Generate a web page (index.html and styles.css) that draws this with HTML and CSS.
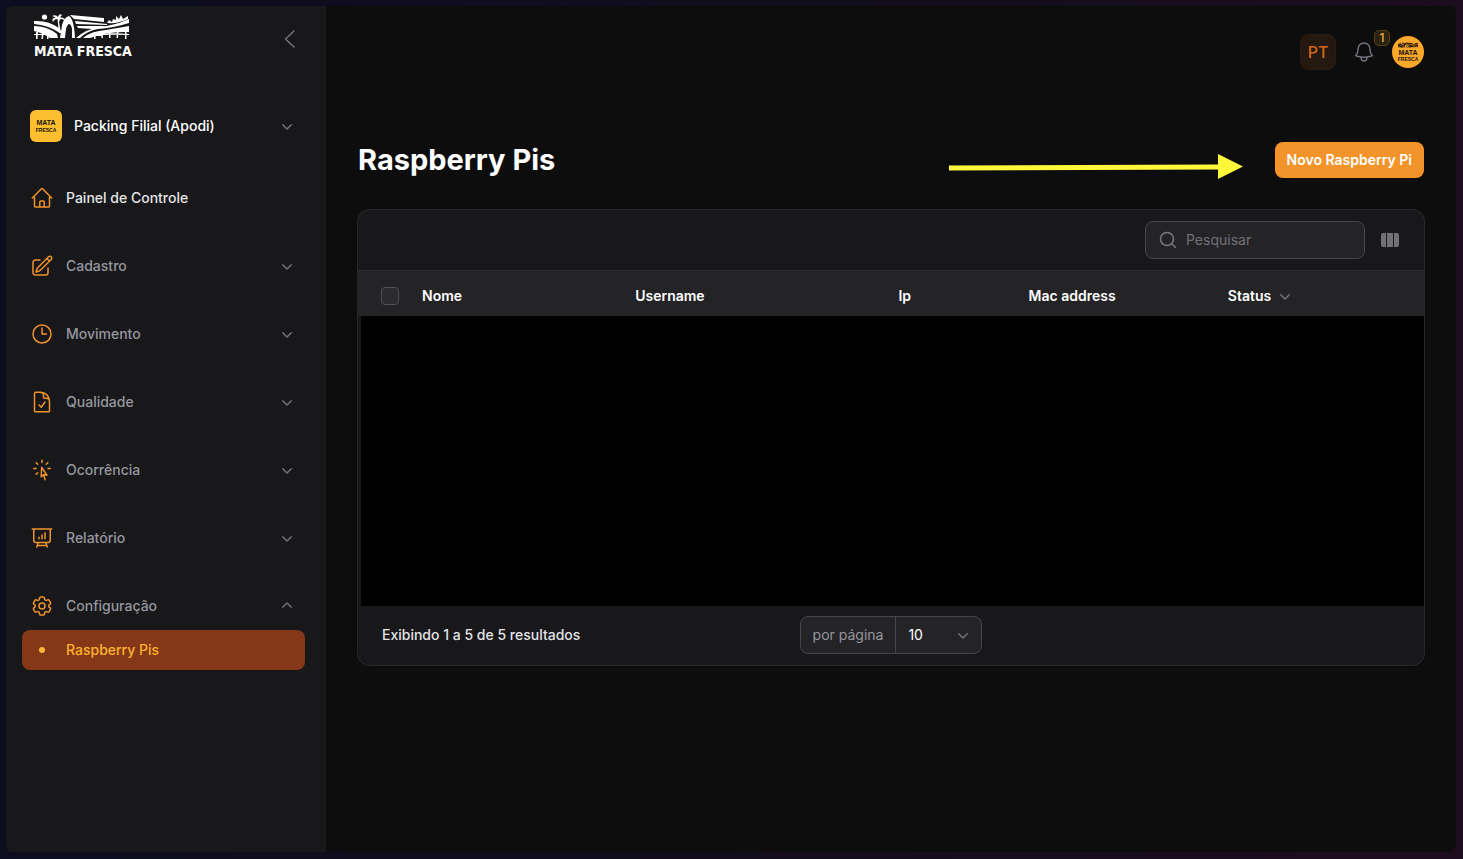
FILE: index.html
```html
<!DOCTYPE html>
<html lang="pt-BR">
<head>
<meta charset="utf-8">
<meta name="viewport" content="width=device-width, initial-scale=1">
<title>Raspberry Pis</title>
<link rel="stylesheet" href="styles.css">
</head>
<body>
<svg class="sprite" aria-hidden="true">
  <symbol id="chevron-down" viewBox="0 0 20 20"><path fill="currentColor" d="M5.22 8.22a.75.75 0 0 1 1.06 0L10 11.94l3.72-3.72a.75.75 0 1 1 1.06 1.06l-4.25 4.25a.75.75 0 0 1-1.06 0L5.22 9.28a.75.75 0 0 1 0-1.06Z"/></symbol>
  <symbol id="chevron-up" viewBox="0 0 20 20"><path fill="currentColor" d="M14.78 11.78a.75.75 0 0 1-1.06 0L10 8.06l-3.72 3.72a.75.75 0 1 1-1.06-1.06l4.25-4.25a.75.75 0 0 1 1.06 0l4.25 4.25a.75.75 0 0 1 0 1.06Z"/></symbol>
  <symbol id="landscape" viewBox="0 0 95 25">
    <circle cx="10.500" cy="3" r="2.600"/>
    <path d="M0 7Q14 6 25 14L28 19H26Q14 11 0 10ZM0 12Q13 12 23 20L24 24H16Q9 19 0 17Z"/>
    <path d="M23.500 5Q20 5 19 8Q17 4 22 3.500L18 2Q22 0 24 3Q25 -1 28 1L26 3.500Q31 3 31 7Q28 4 26 5.500L25 8L27 19H25Z"/>
    <path d="M26 24L28 11Q30 3 35 2Q40 5 41 24H38V15Q37 10 35 10Q32 10 31 24Z"/>
    <path d="M36 1L70 4V8L40 5ZM41 7L73 10V11L42 10ZM43 12L71 12L58 15L44 14ZM42 24Q52 15 66 13Q82 11 95 5V9Q79 14 64 15Q53 17 46 24ZM49 24Q57 17 72 16L95 12V18Q74 17 56 24Z"/>
    <path d="M73 9L75 6L78 8L79 5L82 6L82 2L85 5L87 1L89 5L94 2V5Q84 10 73 9Z"/>
    <path d="M0 20H16V21H0ZM2 18H4L3.500 25H2ZM8 18H9.500L9 25H7.500ZM13 18H14.500V25H13ZM56 21Q74 18 95 20V21Q74 20 56 22ZM60 18H61.500V25H60ZM67 18H68.500L69 24H67.500ZM75 17H76.500V24H75ZM83 17H84.500L84 24H82.500ZM91 18H92.500V25H91Z"/>
  </symbol>
</svg>

<div class="app">
  <aside class="sidebar">
    <header class="brand-row">
      <a class="brand" href="#">
        <svg class="brand-art" aria-hidden="true"><use href="#landscape"/></svg>
        <span class="brand-name">MATA FRESCA</span>
      </a>
      <button class="collapse" type="button" aria-label="Recolher menu">
        <svg viewBox="0 0 24 24" class="icon-24"><path d="M16 4L7.500 12L16 20"/></svg>
      </button>
    </header>

    <button class="tenant" type="button">
      <svg class="tile" viewBox="0 0 32 32" aria-hidden="true">
        <rect width="32" height="32" fill="#fdbf2f"/>
        <text x="16" y="15" class="tile-text">MATA</text>
        <text x="16" y="22" class="tile-text tile-small">FRESCA</text>
      </svg>
      <span class="grow">Packing Filial (Apodi)</span>
      <svg class="chevron"><use href="#chevron-down"/></svg>
    </button>

    <nav class="menu" aria-label="Principal">
      <a class="item item-plain" href="#">
        <svg viewBox="0 0 24 24" class="icon-24"><path d="m2.250 12 8.954-8.955c.44-.439 1.152-.439 1.591 0L21.750 12M4.500 9.750v10.125c0 .621.504 1.125 1.125 1.125H9.750v-4.875c0-.621.504-1.125 1.125-1.125h2.250c.621 0 1.125.504 1.125 1.125V21h4.125c.621 0 1.125-.504 1.125-1.125V9.750M8.250 21h8.250"/></svg>
        <span class="grow">Painel de Controle</span>
      </a>
      <button class="item" type="button">
        <svg viewBox="0 0 24 24" class="icon-24"><path d="m16.862 4.487 1.687-1.688a1.875 1.875 0 1 1 2.652 2.652L10.582 16.070a4.500 4.500 0 0 1-1.897 1.130L6 18l.8-2.685a4.500 4.500 0 0 1 1.130-1.897l8.932-8.931Zm0 0L19.500 7.125M18 14v4.750A2.250 2.250 0 0 1 15.750 21H5.250A2.250 2.250 0 0 1 3 18.750V8.250A2.250 2.250 0 0 1 5.250 6H10"/></svg>
        <span class="grow">Cadastro</span>
        <svg class="chevron"><use href="#chevron-down"/></svg>
      </button>
      <button class="item" type="button">
        <svg viewBox="0 0 24 24" class="icon-24"><path d="M12 6v6h4.500m4.500 0a9 9 0 1 1-18 0 9 9 0 0 1 18 0Z"/></svg>
        <span class="grow">Movimento</span>
        <svg class="chevron"><use href="#chevron-down"/></svg>
      </button>
      <button class="item" type="button">
        <svg viewBox="0 0 24 24" class="icon-24"><path d="M10.125 2.250h-4.500c-.621 0-1.125.504-1.125 1.125v17.250c0 .621.504 1.125 1.125 1.125h12.750c.621 0 1.125-.504 1.125-1.125v-9M10.125 2.250h.375a9 9 0 0 1 9 9v.375M10.125 2.250A3.375 3.375 0 0 1 13.500 5.625v1.500c0 .621.504 1.125 1.125 1.125h1.500a3.375 3.375 0 0 1 3.375 3.375M9 15l2.250 2.250L15 12"/></svg>
        <span class="grow">Qualidade</span>
        <svg class="chevron"><use href="#chevron-down"/></svg>
      </button>
      <button class="item" type="button">
        <svg viewBox="0 0 24 24" class="icon-24"><path d="M15.042 21.672 13.684 16.600m0 0-2.510 2.225.569-9.470 5.227 7.917-3.286-.672ZM12 2.250V4.500m5.834.166-1.591 1.591M20.250 10.500H18M7.757 14.743l-1.590 1.590M6 10.500H3.750m4.007-4.243-1.590-1.590"/></svg>
        <span class="grow">Ocorrência</span>
        <svg class="chevron"><use href="#chevron-down"/></svg>
      </button>
      <button class="item" type="button">
        <svg viewBox="0 0 24 24" class="icon-24"><path d="M3.750 3v11.250A2.250 2.250 0 0 0 6 16.500h2.250M3.750 3h-1.500m1.500 0h16.500m0 0h1.500m-1.500 0v11.250A2.250 2.250 0 0 1 18 16.500h-2.250m-7.500 0h7.500m-7.500 0-1 3m8.500-3 1 3m0 0 .5 1.500m-.5-1.500h-9.500m0 0-.5 1.500M9 11.250v1.500M12 9v3.750m3-6v6"/></svg>
        <span class="grow">Relatório</span>
        <svg class="chevron"><use href="#chevron-down"/></svg>
      </button>
      <div class="group">
        <button class="item" type="button" aria-expanded="true">
          <svg viewBox="0 0 24 24" class="icon-24"><path d="M9.594 3.940c.09-.542.56-.94 1.110-.94h2.593c.55 0 1.020.398 1.110.94l.213 1.281c.063.374.313.686.645.87.074.04.147.083.22.127.325.196.72.257 1.075.124l1.217-.456a1.125 1.125 0 0 1 1.370.49l1.296 2.247a1.125 1.125 0 0 1-.26 1.431l-1.003.827c-.293.241-.438.613-.43.992a7.723 7.723 0 0 1 0 .255c-.008.378.137.75.43.991l1.004.827c.424.35.534.955.26 1.430l-1.298 2.247a1.125 1.125 0 0 1-1.369.491l-1.217-.456c-.355-.133-.75-.072-1.076.124a6.470 6.470 0 0 1-.22.128c-.331.183-.581.495-.644.869l-.213 1.281c-.09.543-.56.94-1.110.94h-2.594c-.55 0-1.019-.398-1.110-.94l-.213-1.281c-.062-.374-.312-.686-.644-.87a6.520 6.520 0 0 1-.22-.127c-.325-.196-.72-.257-1.076-.124l-1.217.456a1.125 1.125 0 0 1-1.369-.49l-1.297-2.247a1.125 1.125 0 0 1 .26-1.431l1.004-.827c.292-.24.437-.613.43-.991a6.932 6.932 0 0 1 0-.255c.007-.38-.138-.751-.43-.992l-1.004-.827a1.125 1.125 0 0 1-.26-1.430l1.297-2.247a1.125 1.125 0 0 1 1.370-.491l1.216.456c.356.133.751.072 1.076-.124.072-.044.146-.086.22-.128.332-.183.582-.495.644-.869l.214-1.280ZM15 12a3 3 0 1 1-6 0 3 3 0 0 1 6 0Z"/></svg>
          <span class="grow">Configuração</span>
          <svg class="chevron"><use href="#chevron-up"/></svg>
        </button>
        <a class="item item-active" href="#" aria-current="page">
          <svg viewBox="0 0 24 24" class="icon-24"><circle cx="12" cy="12" r="3" class="dot"/></svg>
          <span class="grow">Raspberry Pis</span>
        </a>
      </div>
    </nav>
  </aside>

  <main class="main">
    <div class="topbar">
      <button class="lang" type="button">PT</button>
      <button class="bell" type="button" aria-label="Notificações">
        <svg viewBox="0 0 24 24" class="icon-24"><path d="M14.857 17.082a23.848 23.848 0 0 0 5.454-1.310A8.967 8.967 0 0 1 18 9.750V9A6 6 0 0 0 6 9v.75a8.967 8.967 0 0 1-2.312 6.022c1.733.64 3.560 1.085 5.455 1.310m5.714 0a24.255 24.255 0 0 1-5.714 0m5.714 0a3 3 0 1 1-5.714 0"/></svg>
        <span class="badge">1</span>
      </button>
      <button class="avatar" type="button" aria-label="Conta">
        <svg viewBox="0 0 32 32" class="avatar-art">
          <rect width="32" height="32" fill="#fca92b"/>
          <use href="#landscape" x="6" y="6" width="20" height="6"/>
          <text x="16" y="19" class="tile-text">MATA</text>
          <text x="16" y="25" class="tile-text tile-small">FRESCA</text>
        </svg>
      </button>
    </div>

    <header class="page-head">
      <h1 class="title">Raspberry Pis</h1>
      <svg class="arrow" viewBox="0 0 296 28" aria-hidden="true">
        <path d="M1 12.500L270 11.500V1L295 13.500L270 26V16.500L1 17.500Z"/>
      </svg>
      <button class="primary" type="button">Novo Raspberry Pi</button>
    </header>

    <section class="card">
      <div class="toolbar">
        <label class="search">
          <svg viewBox="0 0 20 20" class="search-icon"><circle cx="9" cy="9" r="6.500"/><path d="M14 14L17.500 17.500"/></svg>
          <input class="search-input" type="search" placeholder="Pesquisar" aria-label="Pesquisar">
        </label>
        <button class="columns" type="button" aria-label="Colunas">
          <svg viewBox="0 0 20 20" class="columns-icon"><path d="M3 3H6V17H3Q1 17 1 15V5Q1 3 3 3ZM7 3H13V17H7ZM14 3H17Q19 3 19 5V15Q19 17 17 17H14Z"/></svg>
        </button>
      </div>
      <table class="table">
        <colgroup><col class="c-check"><col class="c-nome"><col class="c-user"><col class="c-ip"><col class="c-mac"><col></colgroup>
        <thead>
          <tr>
            <th class="check-cell"><input class="check" type="checkbox" aria-label="Selecionar todos"></th>
            <th>Nome</th>
            <th>Username</th>
            <th>Ip</th>
            <th>Mac address</th>
            <th><button class="sort" type="button">Status <svg class="chevron"><use href="#chevron-down"/></svg></button></th>
          </tr>
        </thead>
        <tbody>
          <tr><td class="mask-cell" colspan="6"><div class="mask"></div></td></tr>
        </tbody>
      </table>
      <footer class="pager">
        <span class="summary">Exibindo 1 a 5 de 5 resultados</span>
        <div class="per-page">
          <label class="per-label" for="per">por página</label>
          <div class="per-wrap">
            <select class="per-select" id="per"><option>5</option><option selected>10</option><option>25</option><option>50</option></select>
            <svg class="chevron per-chevron"><use href="#chevron-down"/></svg>
          </div>
        </div>
      </footer>
    </section>
  </main>
</div>
</body>
</html>
```

FILE: styles.css
```css
* { box-sizing: border-box; }

body {
  margin: 0;
  min-height: 100vh;
  padding: 6px 7px 7px 6px;
  display: flex;
  background: linear-gradient(100deg, #0c0d20, #110d1d 50%, #1e0d1f);
  color: #fff;
  font: 500 14px/20px Inter, sans-serif;
}

button, input, select { font: inherit; color: inherit; }
button { margin: 0; padding: 0; border: 0; background: none; text-align: left; }
a { color: inherit; text-decoration: none; }
svg { display: block; flex: none; }
.sprite { position: absolute; width: 0; height: 0; }

.icon-24 {
  width: 24px;
  height: 24px;
  fill: none;
  stroke: currentColor;
  stroke-width: 1.5;
  stroke-linecap: round;
  stroke-linejoin: round;
}
.chevron { width: 20px; height: 20px; color: #71717a; }
.grow { flex: 1; }

.app {
  flex: 1;
  display: flex;
  border-radius: 6px;
  overflow: hidden;
  background: #0d0d0d;
}

/* Sidebar */
.sidebar {
  flex: none;
  width: 320px;
  padding: 8px 21px 24px 16px;
  background: #18181b;
}
.brand-row {
  display: flex;
  justify-content: space-between;
  align-items: center;
  padding: 0 3px 0 12px;
}
.brand-art { width: 95px; height: 25px; fill: #fff; }
.brand-name {
  display: block;
  font: 700 14px/24px "DejaVu Sans Condensed", sans-serif;
  white-space: nowrap;
}
.collapse { color: #71717a; }
.tenant {
  width: 100%;
  margin-top: 39px;
  padding: 8px;
  display: flex;
  align-items: center;
  gap: 12px;
}
.tile { width: 32px; height: 32px; border-radius: 6px; }
.tile-text {
  font: 700 7px "Liberation Sans", sans-serif;
  text-anchor: middle;
  fill: #17120a;
}
.tile-small { font-size: 5px; }

.menu {
  margin-top: 28px;
  display: flex;
  flex-direction: column;
  gap: 28px;
}
.item {
  width: 100%;
  padding: 8px;
  display: flex;
  align-items: center;
  gap: 12px;
  border-radius: 8px;
  color: #96969f;
}
.item .icon-24 { color: #f0922b; }
.item-plain { color: #e4e4e7; }
.group { display: flex; flex-direction: column; gap: 4px; }
.item-active { background: #853817; color: #fdb32f; }
.item .dot { fill: #fdb83c; stroke: none; }

/* Main column */
.main { flex: 1; min-width: 0; padding: 28px 32px; }
.topbar {
  display: flex;
  justify-content: flex-end;
  align-items: center;
  gap: 10px;
}
.lang {
  width: 36px;
  height: 36px;
  border: 1px solid #2a1a10;
  border-radius: 8px;
  background: #25180f;
  color: #d2691e;
  font-size: 16px;
  text-align: center;
}
.bell { position: relative; padding: 6px; color: #71717a; }
.badge {
  position: absolute;
  top: -4px;
  right: -8px;
  width: 16px;
  height: 16px;
  border: 1px solid #574318;
  border-radius: 5px;
  background: #2b2211;
  color: #eab136;
  font-size: 12px;
  line-height: 14px;
  text-align: center;
}
.avatar { border-radius: 50%; overflow: hidden; }
.avatar-art { width: 32px; height: 32px; }

.page-head {
  position: relative;
  margin: 72px 0 32px;
  display: flex;
  justify-content: space-between;
  align-items: center;
}
.title { margin: 0; font-size: 29px; line-height: 36px; font-weight: 700; }
.arrow {
  position: absolute;
  top: 11px;
  right: 180px;
  width: 296px;
  height: 28px;
  fill: #fff83a;
}
.primary {
  padding: 8px 12px;
  border-radius: 8px;
  background: #f3942b;
  font-weight: 600;
}

/* Table card */
.card {
  box-shadow: 0 0 0 1px #28282b;
  border-radius: 12px;
  overflow: hidden;
  background: #18181b;
}
.toolbar {
  padding: 11px 24px;
  display: flex;
  justify-content: flex-end;
  align-items: center;
  gap: 15px;
}
.search {
  width: 220px;
  height: 38px;
  padding: 0 12px;
  display: flex;
  align-items: center;
  gap: 8px;
  border: 1px solid #464648;
  border-radius: 8px;
  background: #242427;
}
.search-icon { width: 20px; height: 20px; fill: none; stroke: #77777d; stroke-width: 1.5; stroke-linecap: round; }
.search-input {
  flex: 1;
  min-width: 0;
  padding: 0;
  border: 0;
  outline: 0;
  background: none;
  font-weight: 400;
}
.search-input::placeholder { color: #717177; }
.columns-icon { width: 20px; height: 20px; fill: #717177; }

.table {
  width: 100%;
  border-collapse: separate;
  border-spacing: 0;
  table-layout: fixed;
}
.c-check { width: 52px; }
.c-nome { width: 20%; }
.c-user { width: 24.7%; }
.c-ip { width: 12.2%; }
.c-mac { width: 18.7%; }
th {
  height: 46px;
  padding: 4px 12px 0;
  border-top: 1px solid #2d2d30;
  background: #242427;
  text-align: left;
  font-weight: 600;
}
.check-cell { padding-left: 23px; }
.check {
  display: block;
  appearance: none;
  width: 18px;
  height: 18px;
  margin: 0;
  border: 1px solid #505053;
  border-radius: 4px;
  background: #2c2c2f;
}
.sort { display: flex; align-items: center; gap: 4px; font-weight: 600; }
.mask-cell { padding: 0 0 0 3px; }
.mask { height: 290px; background: #000; }

.pager {
  padding: 10px 24px 11px;
  display: grid;
  grid-template-columns: 1fr auto 1fr;
  align-items: center;
}
.summary { color: #e4e4e7; }
.per-page {
  height: 38px;
  display: flex;
  align-items: center;
  border: 1px solid #464648;
  border-radius: 8px;
  background: #242427;
}
.per-label { padding: 0 12px; font-weight: 400; color: #96969f; }
.per-wrap { position: relative; border-left: 1px solid #464648; }
.per-select {
  display: block;
  width: 85px;
  height: 36px;
  padding: 0 12px;
  border: 0;
  outline: 0;
  appearance: none;
  background: none;
  font-weight: 400;
}
.per-chevron { position: absolute; top: 8px; right: 8px; pointer-events: none; }
```
